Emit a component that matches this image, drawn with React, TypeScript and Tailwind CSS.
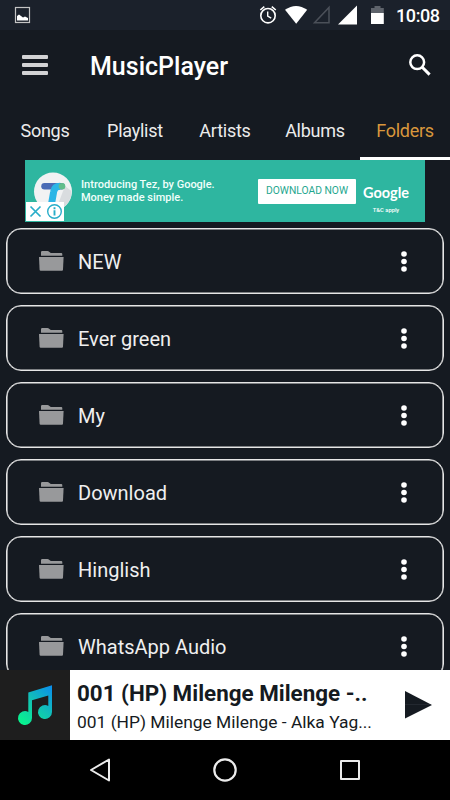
const tabs = ["Songs", "Playlist", "Artists", "Albums", "Folders"];

const folders = [
  "NEW",
  "Ever green",
  "My",
  "Download",
  "Hinglish",
  "WhatsApp Audio",
];

function StatusBar() {
  return (
    <div className="h-[30px] shrink-0 bg-[#1b212b]">
      <svg width="450" height="30" viewBox="0 0 450 30" className="block">
        <rect x="15.5" y="7.5" width="14" height="15" fill="none" stroke="#c4c4c4" strokeWidth="1.2" />
        <path d="M17 20.5v-4.5l2-1.5 2 1.5 2 1.5 2-1 3 1.5v2.5z" fill="#fff" />
        <g fill="none" stroke="#fff" strokeWidth="1.6">
          <circle cx="268" cy="15.7" r="7.2" />
          <path d="M267.7 11.5v4.7l3.5 2" strokeWidth="1.4" />
          <path d="M260.3 10l4-3.4M275.8 10l-4-3.4" />
        </g>
        <path d="M285 9.8Q296 2 307.2 9.8L296.2 23.8z" fill="#fff" />
        <path d="M329 7.5v15.3h-14.5z" fill="none" stroke="#4b5059" strokeWidth="1.5" />
        <path d="M357 5.5V24.5h-19z" fill="#fff" />
        <path d="M371 13V8h3.5V6h6v2h3.3v5z" fill="#5e636b" />
        <path d="M371 13h12.8v11H371z" fill="#fff" />
        <text
          x="396"
          y="22"
          fill="#fff"
          fontFamily="Roboto, sans-serif"
          fontSize="18"
          fontWeight="500"
          textLength="44"
        >
          10:08
        </text>
      </svg>
    </div>
  );
}

function AppBar() {
  return (
    <header className="flex h-[70px] shrink-0 items-center pr-[19px] pl-[22px]">
      <svg width="26" height="20" viewBox="0 0 26 20" fill="#d2d2d4">
        <rect width="26" height="4" rx="1" />
        <rect y="8" width="26" height="4" rx="1" />
        <rect y="16" width="26" height="4" rx="1" />
      </svg>
      <h1 className="ml-[42px] flex-1 pt-[4px] text-[25px] leading-[30px] font-medium text-white">
        MusicPlayer
      </h1>
      <svg
        width="22"
        height="22"
        viewBox="0 0 22 22"
        fill="none"
        stroke="#fff"
        strokeWidth="2.5"
        className="mt-[-1px]"
      >
        <circle cx="8.2" cy="8.2" r="6.9" />
        <path d="M13 13l7.6 7.6" strokeWidth="3" />
      </svg>
    </header>
  );
}

function Tabs() {
  return (
    <nav className="grid h-[60px] shrink-0 grid-cols-5">
      {tabs.map((tab) => (
        <button
          key={tab}
          className={`flex items-center justify-center border-b-[3px] pt-[4px] text-[18px] tracking-[-0.25px] ${
            tab === "Folders"
              ? "border-white text-[#d8973c]"
              : "border-transparent text-[#ececec]"
          }`}
        >
          {tab}
        </button>
      ))}
    </nav>
  );
}

function AdBanner() {
  return (
    <div className="relative mx-[25px] flex h-[62px] shrink-0 items-center bg-[#2eb6a0]">
      <svg width="44" height="62" viewBox="0 0 44 62" className="ml-[4px]">
        <circle cx="24" cy="31.5" r="19" fill="#f1f2f3" />
        <path d="M28 47l8-21 6.5 5a19 19 0 0 1-11 18z" fill="#d9dcdf" />
        <path d="M15.5 26.2h17" stroke="#4a6bb5" strokeWidth="6.5" strokeLinecap="round" />
        <path
          d="M22.5 44l2.2-12.5q.8-5.3 6.5-5.3"
          fill="none"
          stroke="#2ab5e6"
          strokeWidth="7"
        />
        <circle cx="33" cy="26.2" r="3.3" fill="#62bd8b" />
      </svg>
      <p className="ml-[8px] w-[177px] text-[11px] leading-[13px] font-medium whitespace-nowrap text-[#f0fffb]">
        Introducing Tez, by Google.
        <br />
        Money made simple.
      </p>
      <button className="h-[25px] w-[98px] rounded-[1px] bg-white text-[10.3px] whitespace-nowrap text-[#1fa78f]">
        DOWNLOAD NOW
      </button>
      <div className="ml-[6px] w-[48px] pt-[17px] text-center text-white">
        <p className="font-['Lato'] text-[14.5px] leading-[16px] font-bold">Google</p>
        <p className="mt-[5px] text-[5.8px] leading-[8px] font-medium">T&amp;C apply</p>
      </div>
      <div className="absolute bottom-[1px] left-[1px] h-[19px] w-[38px] bg-white">
        <svg
          width="38"
          height="19"
          viewBox="0 0 38 19"
          fill="none"
          stroke="#28adc9"
          strokeWidth="1.7"
        >
          <path d="M4.5 4.5l10 10M14.5 4.5l-10 10" />
          <circle cx="28.5" cy="9.5" r="6.8" strokeWidth="1.4" />
          <path d="M28.5 5.3v1.9M28.5 8.3v5.2" strokeWidth="1.9" />
        </svg>
      </div>
    </div>
  );
}

function FolderRow({ name }: { name: string }) {
  return (
    <li className="flex h-[66px] shrink-0 items-center rounded-[15px] border border-[#e6e6e6] bg-[#151a21] pr-[36px] pl-[32px] shadow-[inset_0_0_0_0.6px_#e6e6e6]">
      <svg width="25" height="20" viewBox="0 0 25 20" fill="#98999b">
        <path d="M2 4.8V1.2Q2 0 3.2 0h5.3q1 0 1.6.7L11.8 2h10.4q1.1 0 1.1 1.1v1.7z" />
        <path d="M0 6h24.6L24 18.7q-.1 1-1 1H1.7q-1 0-1.1-1z" />
      </svg>
      <span className="ml-[14px] flex-1 pt-[2px] text-[20px] leading-[26px] text-[#efefef]">
        {name}
      </span>
      <svg width="6" height="21" viewBox="0 0 6 21" fill="#fff">
        <circle cx="3" cy="3" r="2.8" />
        <circle cx="3" cy="10.5" r="2.8" />
        <circle cx="3" cy="18" r="2.8" />
      </svg>
    </li>
  );
}

function NowPlaying() {
  return (
    <div className="flex h-[70px] shrink-0 bg-white text-[#151a21]">
      <div className="w-[70px] bg-[#1e1e1e]">
        <svg width="70" height="70" viewBox="0 0 70 70">
          <defs>
            <linearGradient
              id="note"
              x1="20"
              y1="53"
              x2="52"
              y2="16"
              gradientUnits="userSpaceOnUse"
            >
              <stop offset="0" stopColor="#08f58c" />
              <stop offset=".5" stopColor="#12c3b4" />
              <stop offset="1" stopColor="#0a8ded" />
            </linearGradient>
          </defs>
          <path
            d="M28.3 22.5L52 15.3V42A7 7 0 1 1 48.3 35.9V25.5L32 30.3V48A7 7 0 1 1 28.3 41.9z"
            fill="url(#note)"
          />
        </svg>
      </div>
      <div className="w-[334px] pl-[7px] whitespace-nowrap">
        <p className="mt-[9px] text-[22.4px] leading-[28px] font-bold">
          001 (HP) Milenge Milenge -..
        </p>
        <p className="mt-[4px] text-[17.4px] leading-[22px]">
          001 (HP) Milenge Milenge - Alka Yag...
        </p>
      </div>
      <svg width="46" height="70" viewBox="0 0 46 70">
        <path d="M1 21L28 35L1 48.5z" fill="#151a21" />
        <path d="M1 34.5h26" stroke="#2e333a" strokeWidth=".6" />
      </svg>
    </div>
  );
}

function NavigationBar() {
  return (
    <div className="h-[60px] shrink-0 bg-black">
      <svg
        width="450"
        height="60"
        viewBox="0 0 450 60"
        fill="none"
        stroke="#ececec"
        strokeWidth="2"
        strokeLinejoin="round"
      >
        <path d="M109 19.5v21L91 30z" />
        <circle cx="225" cy="30" r="10.7" strokeWidth="2.2" />
        <rect x="341" y="21" width="18" height="18" />
      </svg>
    </div>
  );
}

export default function App() {
  return (
    <div className="flex h-[800px] w-[450px] flex-col overflow-hidden bg-[#151a21] font-['Roboto',sans-serif]">
      <StatusBar />
      <AppBar />
      <Tabs />
      <AdBanner />
      <ul className="flex min-h-0 flex-1 flex-col gap-[11px] overflow-hidden px-[6px] pt-[6px]">
        {folders.map((name) => (
          <FolderRow key={name} name={name} />
        ))}
      </ul>
      <NowPlaying />
      <NavigationBar />
    </div>
  );
}
